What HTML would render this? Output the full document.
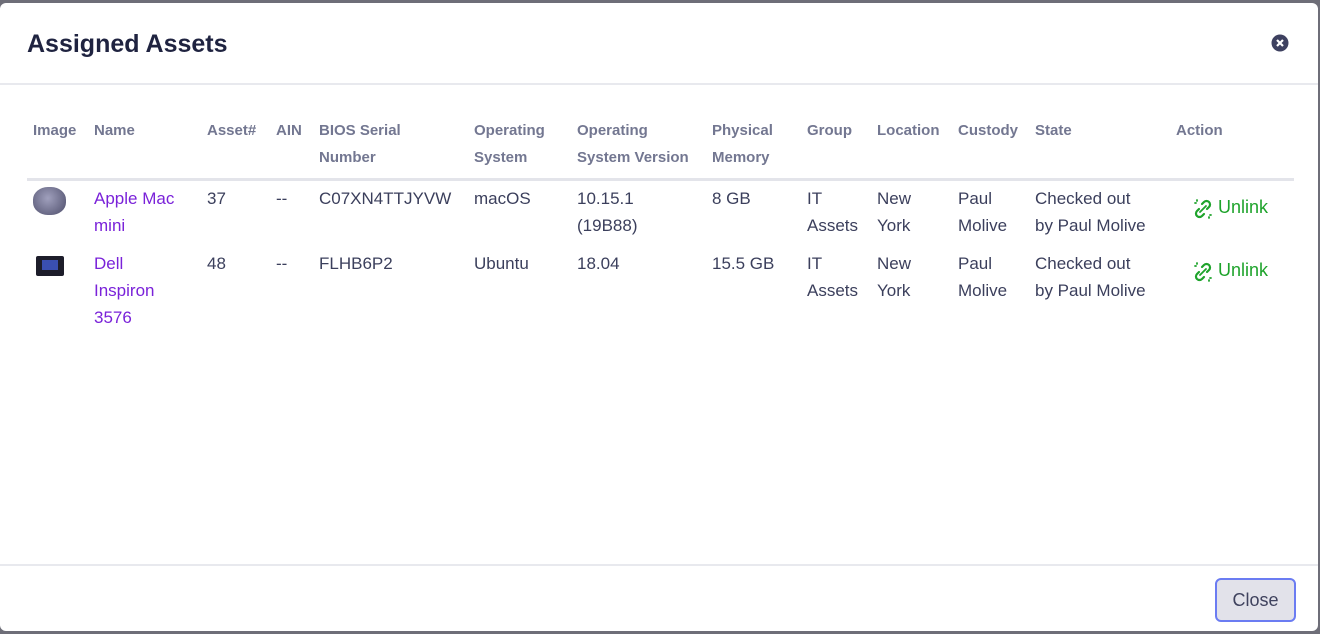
<!DOCTYPE html>
<html><head><style>
body{margin:0;width:1320px;height:634px;background:#6e6e78;font-family:"Liberation Sans",sans-serif;overflow:hidden;position:relative}
.m{position:absolute;left:0;top:3px;width:1318px;height:628px;background:#fff;border-radius:6px}
.a{position:absolute;white-space:nowrap}
.t{font-size:25px;font-weight:bold;color:#1f2340;left:27px;top:30px}
.h{font-size:15px;font-weight:bold;color:#737791;line-height:27px}
.d{font-size:17px;color:#3b3f5c;line-height:27px}
.l{color:#7a22d9}
.u{color:#1ea32b;font-size:18px}
</style></head><body>
<div class="m"></div>
<div class="a t">Assigned Assets</div>
<svg class="a" style="left:1271px;top:34px" width="18" height="18" viewBox="0 0 18 18"><circle cx="9" cy="9" r="8.5" fill="#3e4160"/><path d="M6 6L12 12M12 6L6 12" stroke="#fff" stroke-width="2.2"/></svg>
<div class="a" style="left:0;top:83px;width:1318px;height:2px;background:#e8e9ee"></div>
<div class="a h" style="left:33px;top:117px">Image</div>
<div class="a h" style="left:94px;top:117px">Name</div>
<div class="a h" style="left:207px;top:117px">Asset#</div>
<div class="a h" style="left:276px;top:117px">AIN</div>
<div class="a h" style="left:319px;top:117px">BIOS Serial<br>Number</div>
<div class="a h" style="left:474px;top:117px">Operating<br>System</div>
<div class="a h" style="left:577px;top:117px">Operating<br>System Version</div>
<div class="a h" style="left:712px;top:117px">Physical<br>Memory</div>
<div class="a h" style="left:807px;top:117px">Group</div>
<div class="a h" style="left:877px;top:117px">Location</div>
<div class="a h" style="left:958px;top:117px">Custody</div>
<div class="a h" style="left:1035px;top:117px">State</div>
<div class="a h" style="left:1176px;top:117px">Action</div>
<div class="a" style="left:27px;top:178px;width:1267px;height:3px;background:#e3e4ea"></div>
<div class="a" style="left:33px;top:187px;width:33px;height:28px;border-radius:45%;background:radial-gradient(circle at 45% 40%,#a0a0bd,#4d4d6a);"></div>
<div class="a" style="left:36px;top:256px;width:28px;height:20px;background:#1d1d2a;border-radius:2px"><div style="margin:4px 6px;height:10px;background:#3a4fb0"></div></div>
<div class="a d l" style="left:94px;top:185px">Apple Mac<br>mini</div>
<div class="a d" style="left:207px;top:185px">37</div>
<div class="a d" style="left:276px;top:185px">--</div>
<div class="a d" style="left:319px;top:185px">C07XN4TTJYVW</div>
<div class="a d" style="left:474px;top:185px">macOS</div>
<div class="a d" style="left:577px;top:185px">10.15.1<br>(19B88)</div>
<div class="a d" style="left:712px;top:185px">8 GB</div>
<div class="a d" style="left:807px;top:185px">IT<br>Assets</div>
<div class="a d" style="left:877px;top:185px">New<br>York</div>
<div class="a d" style="left:958px;top:185px">Paul<br>Molive</div>
<div class="a d" style="left:1035px;top:185px">Checked out<br>by Paul Molive</div>
<svg class="a" style="left:1193px;top:199px" width="20" height="20" viewBox="0 0 20 20" fill="none" stroke="#1ea32b" stroke-width="2.2" stroke-linecap="round"><path d="M9 5L11 3a3 3 0 0 1 5 5L14 10M11 15L9 17a3 3 0 0 1-5-5L6 10"/><path d="M2 4h1M4 1v1M17 16h1M16 18v1M7 13l6-6" stroke-width="1.8"/></svg>
<div class="a u" style="left:1218px;top:197px">Unlink</div>
<svg class="a" style="left:1193px;top:262px" width="20" height="20" viewBox="0 0 20 20" fill="none" stroke="#1ea32b" stroke-width="2.2" stroke-linecap="round"><path d="M9 5L11 3a3 3 0 0 1 5 5L14 10M11 15L9 17a3 3 0 0 1-5-5L6 10"/><path d="M2 4h1M4 1v1M17 16h1M16 18v1M7 13l6-6" stroke-width="1.8"/></svg>
<div class="a u" style="left:1218px;top:260px">Unlink</div>
<div class="a d l" style="left:94px;top:250px">Dell<br>Inspiron<br>3576</div>
<div class="a d" style="left:207px;top:250px">48</div>
<div class="a d" style="left:276px;top:250px">--</div>
<div class="a d" style="left:319px;top:250px">FLHB6P2</div>
<div class="a d" style="left:474px;top:250px">Ubuntu</div>
<div class="a d" style="left:577px;top:250px">18.04</div>
<div class="a d" style="left:712px;top:250px">15.5 GB</div>
<div class="a d" style="left:807px;top:250px">IT<br>Assets</div>
<div class="a d" style="left:877px;top:250px">New<br>York</div>
<div class="a d" style="left:958px;top:250px">Paul<br>Molive</div>
<div class="a d" style="left:1035px;top:250px">Checked out<br>by Paul Molive</div>
<div class="a" style="left:0;top:564px;width:1318px;height:2px;background:#e8e9ee"></div>
<div class="a" style="left:1215px;top:578px;width:77px;height:40px;border:2px solid #6b7cf2;border-radius:6px;background:#e2e2ea;color:#3f425e;font-size:18px;text-align:center;line-height:40px">Close</div>
</body></html>
